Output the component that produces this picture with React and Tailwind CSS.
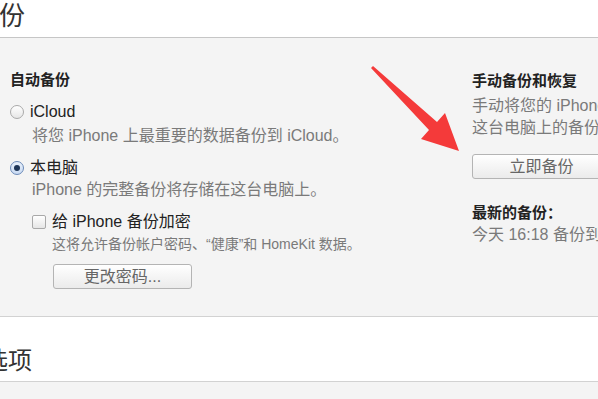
const font = { fontFamily: '"Liberation Sans", "Noto Sans CJK SC", sans-serif' };

const Radio = ({ checked }) => (
  <span
    className={
      checked
        ? "flex h-[14px] w-[14px] items-center justify-center rounded-full border border-[#6b8ab8] bg-gradient-to-b from-[#e8f0fb] to-[#c9daf2]"
        : "h-[14px] w-[14px] rounded-full border border-[#a9a9a9] bg-gradient-to-b from-white to-[#e6e6e6]"
    }
  >
    {checked && <span className="h-[6px] w-[6px] rounded-full bg-[#1d3557]" />}
  </span>
);

const Button = ({ children, className }) => (
  <div
    className={
      "flex h-[25px] w-[139px] shrink-0 items-center justify-center rounded-[3px] border border-[#b4b4b4] bg-gradient-to-b from-white to-[#ebebeb] text-[16px] text-[#666] " +
      className
    }
  >
    {children}
  </div>
);

const Arrow = () => (
  <svg className="absolute left-0 top-0" width="598" height="399" viewBox="0 0 598 399">
    <polygon
      points="371,68 429,130 421,139 459,151 445,113 437,122 373,66"
      fill="#f43a3a"
    />
  </svg>
);

export default function App() {
  return (
    <div className="relative h-[399px] w-[598px] overflow-hidden bg-[#f4f4f4] text-[#222]" style={font}>
      <header className="h-[38px] border-b border-[#c6c6c6] bg-white">
        <h1 className="-ml-[27px] whitespace-nowrap text-[26px] leading-[32px] text-[#333]">备份</h1>
      </header>

      <section className="flex h-[279px] border-b border-[#d2d2d2] pt-[31px]">
        <div className="w-[472px] shrink-0 pl-[10px]">
          <h3 className="h-[22px] text-[15px] font-bold leading-[22px]">自动备份</h3>

          <div className="mt-[10px] flex h-[22px] items-center gap-[6px]">
            <Radio />
            <span className="text-[16px]">iCloud</span>
          </div>
          <p className="mt-[2px] h-[22px] pl-[22px] text-[16px] leading-[22px] text-[#7a7a7a]">将您 iPhone 上最重要的数据备份到 iCloud。</p>

          <div className="mt-[10px] flex h-[22px] items-center gap-[6px]">
            <Radio checked />
            <span className="text-[16px]">本电脑</span>
          </div>
          <p className="h-[22px] pl-[22px] text-[16px] leading-[22px] text-[#7a7a7a]">iPhone 的完整备份将存储在这台电脑上。</p>

          <div className="mt-[10px] flex h-[22px] items-center gap-[6px] pl-[22px]">
            <span className="h-[14px] w-[14px] rounded-[2px] border border-[#a9a9a9] bg-gradient-to-b from-white to-[#e6e6e6]" />
            <span className="text-[16px]">给 iPhone 备份加密</span>
          </div>
          <p className="h-[22px] whitespace-nowrap pl-[42px] text-[14px] leading-[22px] text-[#7a7a7a]">这将允许备份帐户密码、“健康”和 HomeKit 数据。</p>

          <Button className="ml-[43px] mt-[9px] h-[24px]">更改密码...</Button>
        </div>

        <div className="min-w-0 flex-1 whitespace-nowrap">
          <h3 className="mt-[1px] h-[22px] text-[15px] font-bold leading-[22px]">手动备份和恢复</h3>
          <p className="mt-[3px] text-[16px] leading-[22px] text-[#7a7a7a]">
            手动将您的 iPhone 备份到这台电脑上，或从存储在
            <br />
            这台电脑上的备份恢复。
          </p>
          <Button className="mt-[15px]">立即备份</Button>
          <h3 className="mt-[23px] h-[22px] text-[15px] font-bold leading-[22px]">最新的备份：</h3>
          <p className="h-[22px] text-[16px] leading-[22px] text-[#7a7a7a]">今天 16:18 备份到这台电脑</p>
        </div>
      </section>

      <section className="h-[65px] border-b border-[#d2d2d2] bg-white pt-[29px]">
        <h2 className="-ml-[16px] whitespace-nowrap text-[24px] leading-[30px] text-[#333]">选项</h2>
      </section>

      <Arrow />
    </div>
  );
}
